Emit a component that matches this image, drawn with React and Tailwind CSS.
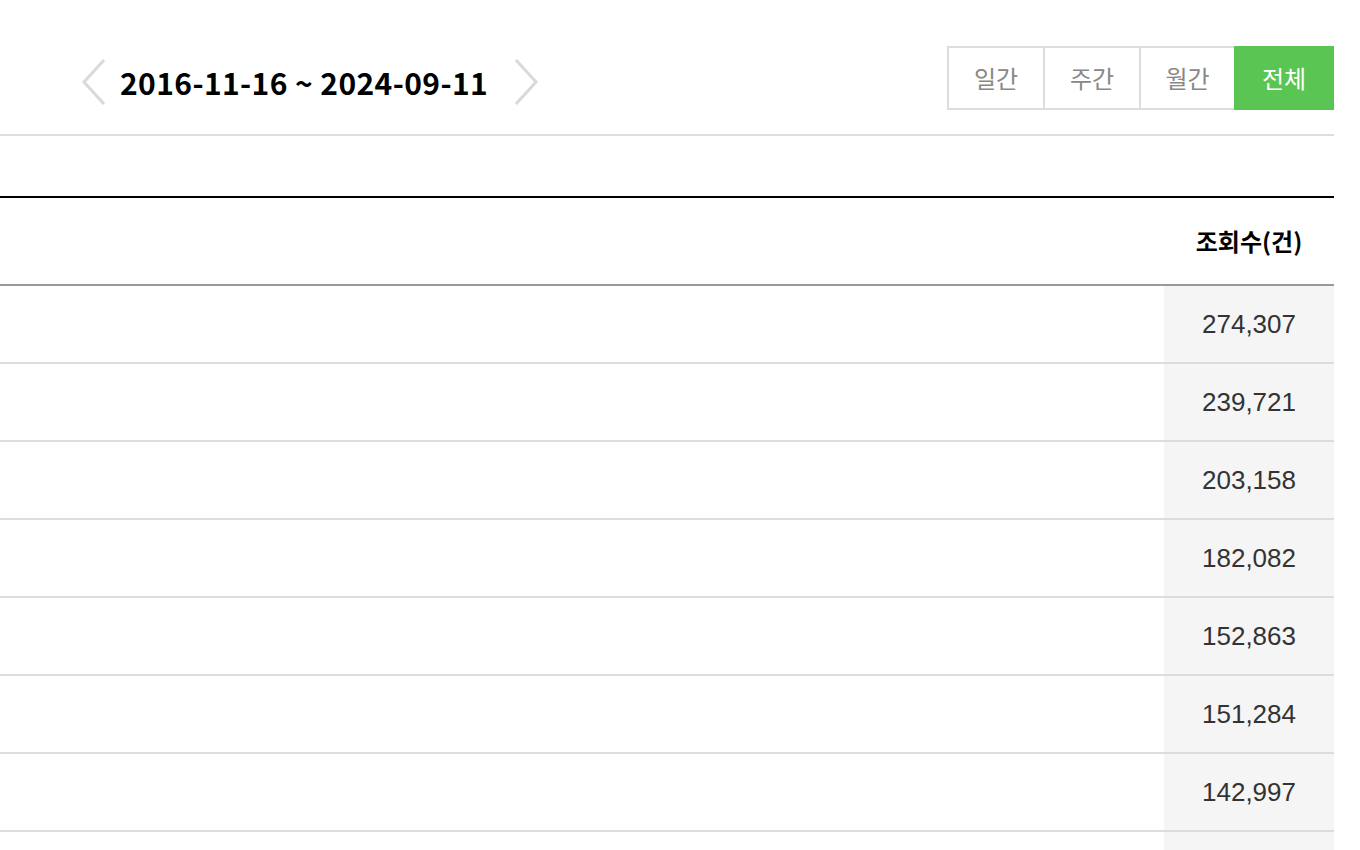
import React, { useState } from 'react';

const rows = ['274,307', '239,721', '203,158', '182,082', '152,863', '151,284', '142,997'];
const tabs = [
  { label: '일간', w: 'w-[96px]' },
  { label: '주간', w: 'w-[96px]' },
  { label: '월간', w: 'w-[95px]' },
  { label: '전체', w: 'w-[100px]' },
];

function Chevron({ dir }) {
  return (
    <svg width="28" height="48" viewBox="0 0 28 48" fill="none">
      <path
        d={dir === 'left' ? 'M24 2 L4 24 L24 46' : 'M4 2 L24 24 L4 46'}
        stroke="#d9d9d9"
        strokeWidth="3"
      />
    </svg>
  );
}

export default function App() {
  const [active, setActive] = useState('전체');

  return (
    <div className="w-[1334px] bg-white font-['Liberation_Sans','Noto_Sans_CJK_KR',sans-serif]">
      {/* period selector */}
      <div className="h-[136px] flex items-start justify-between border-b-2 border-[#dedede]">
        <div className="flex items-center pl-[80px] pt-[58px]">
          <Chevron dir="left" />
          <span className="ml-[12px] text-[30px] font-bold text-black leading-[48px] font-['Noto_Sans_CJK_KR',sans-serif] tracking-[0.4px]">
            2016-11-16 ~ 2024-09-11
          </span>
          <div className="ml-[24px]">
            <Chevron dir="right" />
          </div>
        </div>
        <div className="flex mt-[46px] h-[64px]">
          {tabs.map((t) =>
            t.label === active ? (
              <button
                key={t.label}
                onClick={() => setActive(t.label)}
                className={`${t.w} h-full bg-[#5bc553] text-white text-[24px] font-['Noto_Sans_CJK_KR',sans-serif]`}
              >
                {t.label}
              </button>
            ) : (
              <button
                key={t.label}
                onClick={() => setActive(t.label)}
                className={`${t.w} h-full border-2 border-r-0 border-[#dddddd] text-[#888888] text-[24px] font-['Noto_Sans_CJK_KR',sans-serif]`}
              >
                {t.label}
              </button>
            )
          )}
        </div>
      </div>

      {/* ranking table */}
      <div className="mt-[60px] border-t-2 border-black">
        <div className="h-[88px] flex items-center justify-end border-b-2 border-[#999999]">
          <div className="w-[170px] text-center text-[24px] font-bold text-black font-['Noto_Sans_CJK_KR',sans-serif]">
            조회수(건)
          </div>
        </div>
        {rows.map((n) => (
          <div key={n} className="h-[78px] flex justify-end border-b-2 border-[#dddddd]">
            <div className="w-[170px] bg-[#f5f5f5] flex items-center justify-center text-[26px] text-[#333333]">
              {n}
            </div>
          </div>
        ))}
        <div className="h-[40px] flex justify-end">
          <div className="w-[170px] bg-[#f5f5f5]" />
        </div>
      </div>
    </div>
  );
}
